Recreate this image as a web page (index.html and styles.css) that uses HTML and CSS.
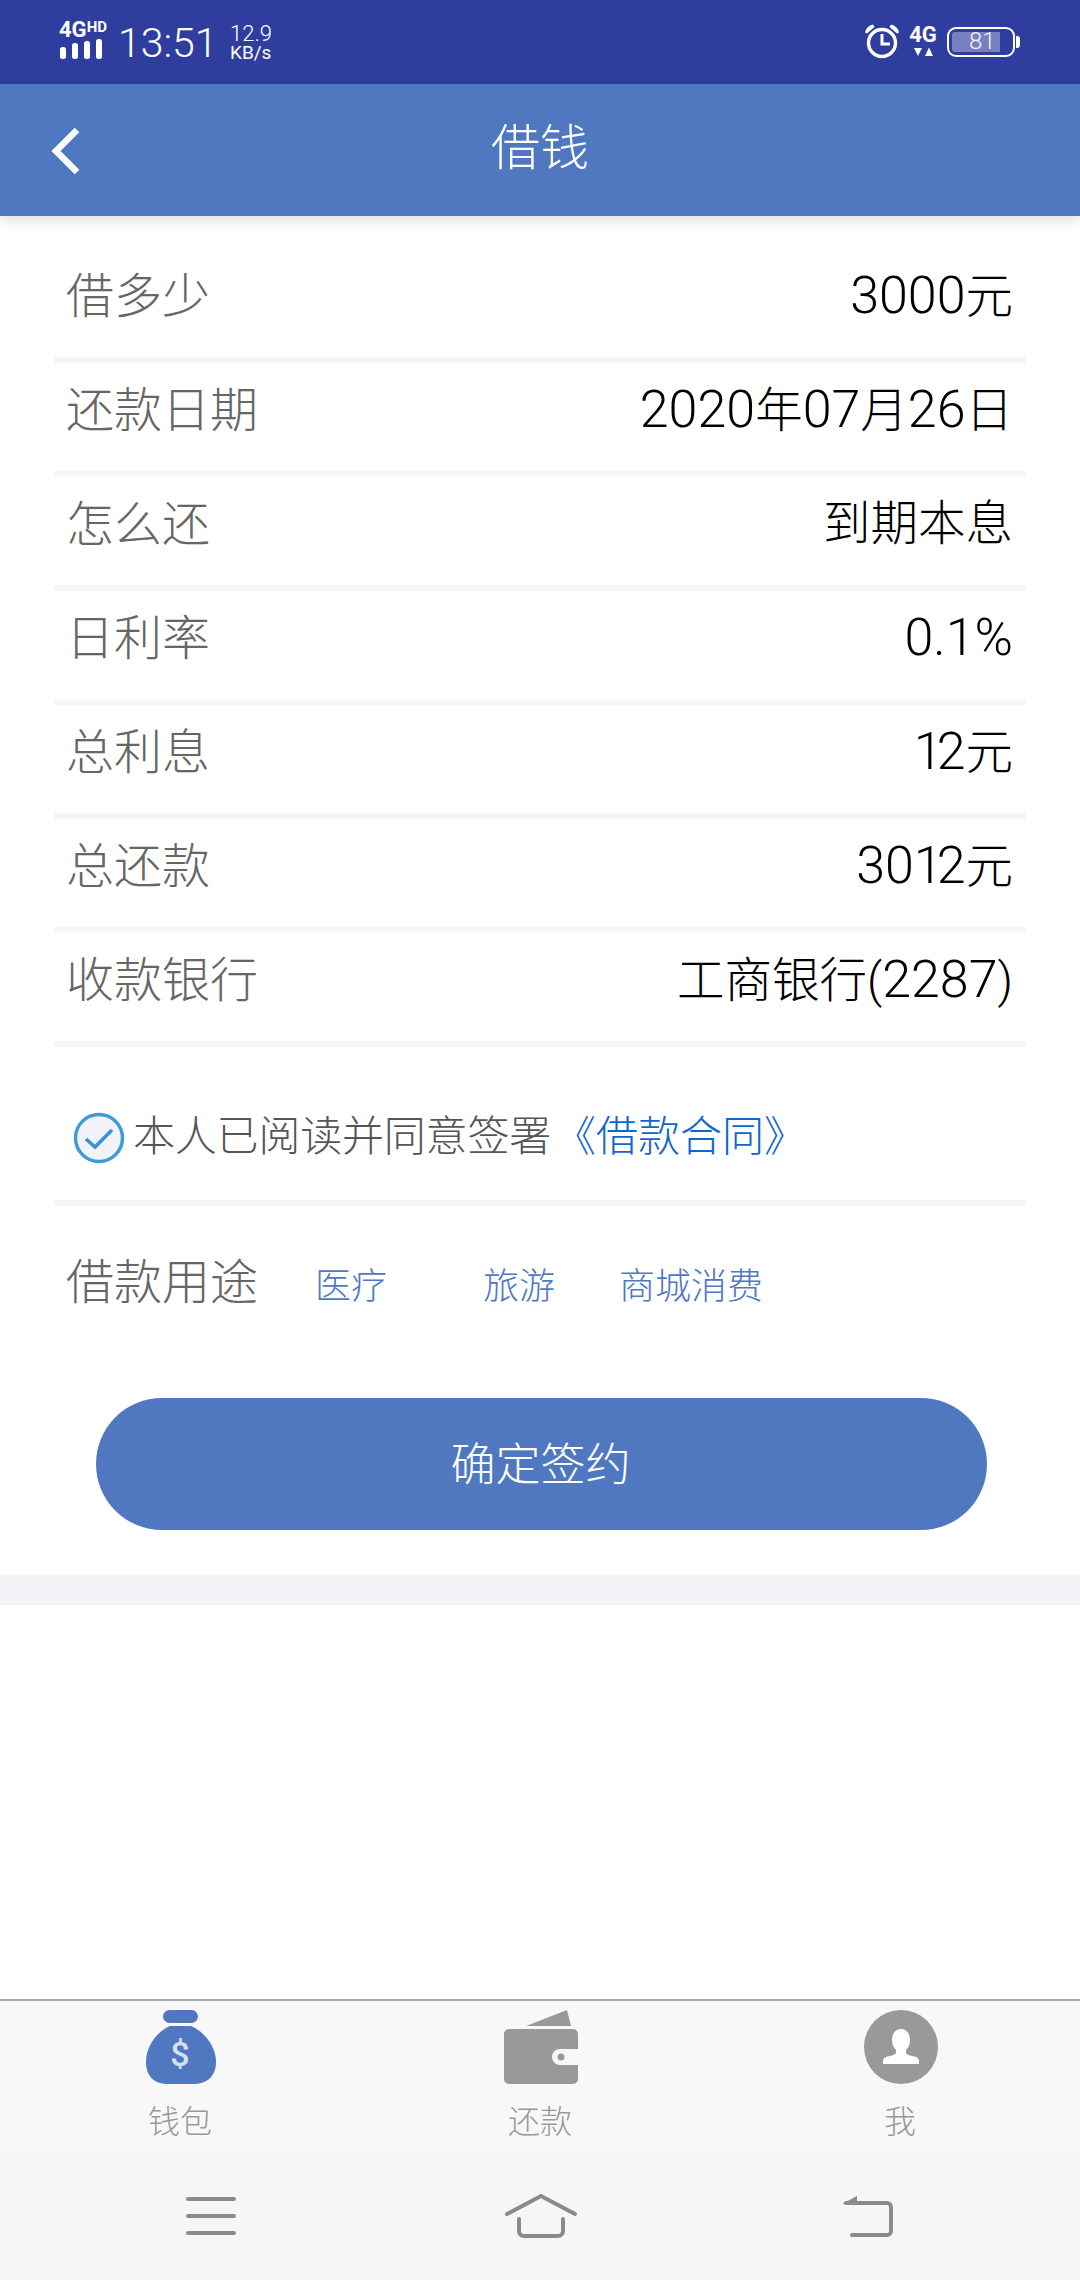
FILE: index.html
```html
<!DOCTYPE html>
<html lang="zh-CN">
<head>
    <meta charset="UTF-8">
    <meta name="viewport" content="width=device-width, initial-scale=1.0">
    <title>借钱</title>
    <link rel="stylesheet" href="styles.css">
</head>

<body>
    <div class="page">
        <!-- status bar -->
        <div class="status-bar">
            <div class="signal">
                <div class="signal-text">4G<span class="signal-hd">HD</span></div>
                <svg class="signal-bars" width="44" height="21" viewBox="0 0 44 21" fill="#fff">
                    <rect x="0" y="9" width="6" height="12" rx="2.5"/>
                    <rect x="12" y="5" width="6" height="16" rx="2.5"/>
                    <rect x="24" y="3" width="6" height="18" rx="2.5"/>
                    <rect x="36" y="1" width="6" height="20" rx="2.5"/>
                </svg>
            </div>
            <div class="clock">13:51</div>
            <div class="speed">
                <div class="speed-num">12.9</div>
                <div class="speed-unit">KB/s</div>
            </div>
            <div class="status-right">
                <svg class="alarm" width="36" height="36" viewBox="0 0 36 36" fill="none" stroke="#fff">
                    <circle cx="18" cy="20" r="13.5" stroke-width="3.4"/>
                    <path d="M18 11v10h8" stroke-width="3"/>
                    <path d="M1 9.500C2 5 5 2.500 9 1.500l1.500 2.500L3 10.500z" fill="#fff" stroke="none"/>
                    <path d="M35 9.500C34 5 31 2.500 27 1.500l-1.500 2.500L33 10.500z" fill="#fff" stroke="none"/>
                </svg>
                <div class="net">
                    <div class="net-text">4G</div>
                    <svg width="19" height="10" viewBox="0 0 19 10" fill="#fff">
                        <path d="M0 1h8l-4 8z"/>
                        <path d="M15 0.500l4 8.500h-8z"/>
                    </svg>
                </div>
                <div class="battery">
                    <div class="battery-body">
                        <div class="battery-fill"></div>
                        <span class="battery-num">81</span>
                    </div>
                    <div class="battery-nub"></div>
                </div>
            </div>
        </div>

        <!-- header -->
        <div class="header">
            <svg class="back" width="30" height="48" viewBox="0 0 30 48" fill="none" stroke="#fff" stroke-width="6.500">
                <path d="M26 3L5 24l21 21"/>
            </svg>
            <h1 class="title">借钱</h1>
        </div>

        <div class="main">
            <div class="rows">
                <div class="row"><span class="row-label">借多少</span><span class="row-value"><span class="num">3000</span>元</span></div>
                <div class="row"><span class="row-label">还款日期</span><span class="row-value"><span class="num">2020</span>年<span class="num">07</span>月<span class="num">26</span>日</span></div>
                <div class="row"><span class="row-label">怎么还</span><span class="row-value">到期本息</span></div>
                <div class="row"><span class="row-label">日利率</span><span class="row-value"><span class="num">0.1%</span></span></div>
                <div class="row"><span class="row-label">总利息</span><span class="row-value"><span class="num"><span class="one">1</span>2</span>元</span></div>
                <div class="row"><span class="row-label">总还款</span><span class="row-value"><span class="num">30<span class="one">1</span>2</span>元</span></div>
                <div class="row"><span class="row-label">收款银行</span><span class="row-value">工商银行(<span class="num">2287</span>)</span></div>
            </div>

            <div class="agree">
                <svg class="agree-check" width="52" height="52" viewBox="0 0 52 52">
                    <circle cx="26" cy="26" r="23.500" fill="#f2f3f8" stroke="#3f9bd8" stroke-width="3.500"/>
                    <path d="M13 27l9 8 17-17" fill="none" stroke="#3f8fd4" stroke-width="3.500"/>
                </svg>
                <span class="agree-text">本人已阅读并同意签署</span>
                <span class="agree-link">《借款合同》</span>
            </div>

            <div class="purpose">
                <span class="purpose-label">借款用途</span>
                <span class="purpose-opt first">医疗</span>
                <span class="purpose-opt">旅游</span>
                <span class="purpose-opt">商城消费</span>
            </div>

            <div class="btn-wrap">
                <button class="btn-sign">确定签约</button>
            </div>

            <div class="band"></div>
        </div>

        <!-- tabs -->
        <div class="tabbar">
            <div class="tab">
                <svg width="72" height="76" viewBox="0 0 72 76">
                    <rect x="18" y="1" width="35" height="13" rx="6.500" fill="#4f78c1"/>
                    <path d="M25 17h21C60 23 71 38 71 53c0 15-10 22-23 22H23C10 75 1 68 1 53 1 38 11 23 25 17z" fill="#4f78c1"/>
                    <text class="bag-sign" x="35" y="57" text-anchor="middle">$</text>
                </svg>
                <span class="tab-label">钱包</span>
            </div>
            <div class="tab">
                <svg width="76" height="76" viewBox="0 0 76 76" fill="#999">
                    <path d="M23 17L64 1l4 16z"/>
                    <path d="M6 20h64a5 5 0 0 1 5 5v15H57a8 8 0 0 0 0 16h18v14a5 5 0 0 1-5 5H6a5 5 0 0 1-5-5V25a5 5 0 0 1 5-5z"/>
                    <circle cx="58" cy="48" r="3.500"/>
                </svg>
                <span class="tab-label">还款</span>
            </div>
            <div class="tab">
                <svg width="76" height="76" viewBox="0 0 76 76">
                    <circle cx="38" cy="38" r="37" fill="#999"/>
                    <path d="M38 20c5 0 9 4 9 11 0 5-2 8-4 10v3c1 2 6 3 10 4 2 1 3 2 3 4v3H20v-3c0-2 1-3 3-4 4-1 9-2 10-4v-3c-2-2-4-5-4-10 0-7 4-11 9-11z" fill="#fff"/>
                </svg>
                <span class="tab-label">我</span>
            </div>
        </div>

        <!-- system nav -->
        <div class="navbar">
            <svg width="50" height="42" viewBox="0 0 50 42" fill="none" stroke="#8a8a8a" stroke-width="4" stroke-linecap="round">
                <path d="M2 4h46M2 21h46M2 38h46"/>
            </svg>
            <svg class="nav-home" width="72" height="44" viewBox="0 0 72 44" fill="none" stroke="#8a8a8a" stroke-width="4" stroke-linecap="round" stroke-linejoin="round">
                <path d="M2 20L36 2l34 18"/>
                <path d="M14 25v12a5 5 0 0 0 5 5h34a5 5 0 0 0 5-5V25"/>
            </svg>
            <svg width="52" height="42" viewBox="0 0 52 42" fill="none" stroke="#8a8a8a" stroke-width="4" stroke-linecap="round" stroke-linejoin="round">
                <path d="M4 8h41a4 4 0 0 1 4 4v24a4 4 0 0 1-4 4H10"/>
                <path d="M0 9L15 1v8z" fill="#8a8a8a" stroke="none"/>
            </svg>
        </div>
    </div>
</body>
</html>
```

FILE: styles.css
```css
* {
    box-sizing: border-box;
}
body {
    margin: 0;
    font-family: Roboto, "Noto Sans CJK SC", sans-serif;
    background: #fff;
}
.page {
    width: 1080px;
    height: 2280px;
    display: flex;
    flex-direction: column;
    overflow: hidden;
}

/* status bar */
.status-bar {
    height: 84px;
    background: #2f3e9e;
    color: #fff;
    display: flex;
    align-items: center;
    padding: 0 60px 0 60px;
}
.signal {
    width: 58px;
    display: flex;
    flex-direction: column;
    margin-top: -6px;
}
.signal-text {
    font-size: 22px;
    font-weight: 700;
    line-height: 17px;
    height: 19px;
    margin-left: -1px;
}
.signal-hd {
    font-size: 15px;
    vertical-align: 5px;
}
.clock {
    font-size: 41px;
    font-weight: 300;
    width: 112px;
    line-height: 48px;
    padding-top: 2px;
}
.speed {
    line-height: 19px;
    margin-top: 1px;
}
.speed-num {
    font-size: 22px;
    font-weight: 300;
}
.speed-unit {
    font-size: 19px;
}
.status-right {
    margin-left: auto;
    display: flex;
    align-items: center;
    margin-right: 0;
}
.alarm {
    margin-right: 9px;
    margin-top: -2px;
}
.net {
    width: 28px;
    margin-right: 10px;
    display: flex;
    flex-direction: column;
    align-items: center;
    margin-top: -2px;
}
.net-text {
    font-size: 22px;
    font-weight: 700;
    line-height: 20px;
    margin-bottom: 2px;
}
.battery {
    display: flex;
    align-items: center;
    margin-top: -1px;
}
.battery-body {
    width: 68px;
    height: 30px;
    border: 2.500px solid #fff;
    border-radius: 9px;
    padding: 3px;
    display: flex;
    position: relative;
}
.battery-fill {
    width: 48px;
    background: rgba(255, 255, 255, .35);
    border-radius: 3px 0 0 3px;
}
.battery-num {
    position: absolute;
    top: 0;
    left: 20px;
    font-size: 24px;
    line-height: 25px;
    color: #f0f1f8;
    font-weight: 300;
}
.battery-nub {
    width: 4px;
    height: 12px;
    background: #fff;
    border-radius: 0 3px 3px 0;
    margin-left: 1px;
}

/* header */
.header {
    height: 132px;
    background: #4f78c1;
    display: flex;
    align-items: center;
    justify-content: center;
    position: relative;
    box-shadow: 0 4px 14px rgba(0, 0, 0, .14);
    z-index: 1;
}
.back {
    position: absolute;
    left: 51px;
    top: 43px;
}
.title {
    margin: 0;
    color: #fff;
    font-size: 49px;
    font-weight: 300;
    line-height: 132px;
    margin-top: -2px;
}

.main {
    flex: 1;
    padding-top: 33px;
}

/* rows */
.rows {
    margin: 0 54px;
}
.row {
    height: 114px;
    border-bottom: 6px solid #f6f6f6;
    padding: 0 13px 0 12px;
    display: flex;
    justify-content: space-between;
    line-height: 94px;
}
.row-label {
    font-size: 48px;
    color: #666;
    font-weight: 300;
    margin-top: 1px;
}
.row-value {
    font-size: 47.500px;
    color: #000;
    font-weight: 300;
}
.num {
    font-size: 52px;
}
.one {
    letter-spacing: -6px;
}

/* agreement */
.agree {
    margin: 0 54px;
    height: 159px;
    border-bottom: 6px solid #f6f6f6;
    display: flex;
    align-items: center;
    padding: 18px 0 0 19px;
}
.agree-check {
    margin-top: 10px;
    margin-right: 8px;
}
.agree-text {
    font-size: 42px;
    color: #555;
    font-weight: 300;
    letter-spacing: -.2px;
}
.agree-link {
    font-size: 42px;
    color: #0f66cc;
    font-weight: 300;
    margin-left: 3px;
}

/* purpose */
.purpose {
    margin: 0 54px;
    padding-left: 12px;
    height: 134px;
    display: flex;
    align-items: center;
    padding-top: 10px;
}
.purpose-label {
    font-size: 48px;
    color: #666;
    font-weight: 300;
    margin-right: 57px;
}
.purpose-opt {
    font-size: 36px;
    color: #4f78c1;
    font-weight: 300;
    margin-right: 64px;
    margin-top: 10px;
}
.purpose-opt.first {
    margin-right: 96px;
}

/* button */
.btn-wrap {
    padding: 58px 93px 0 96px;
}
.btn-sign {
    display: block;
    width: 100%;
    height: 132px;
    border: 0;
    padding: 0 2px 6px 0;
    border-radius: 66px;
    background: #4f78c1;
    color: #fff;
    font-family: inherit;
    font-size: 45px;
    font-weight: 300;
}
.band {
    height: 30px;
    margin-top: 45px;
    background: #f3f4f8;
}

/* tabs */
.tabbar {
    height: 154px;
    background: #f8f8f8;
    border-top: 2px solid #aaa;
    display: grid;
    grid-template-columns: repeat(3, 1fr);
}
.tab {
    display: flex;
    flex-direction: column;
    align-items: center;
    padding-top: 8px;
}
.tab svg {
    display: block;
    margin-left: 2px;
}
.tab-label {
    font-size: 32px;
    line-height: 46px;
    color: #999;
    font-weight: 300;
    margin-top: 14px;
}
.bag-sign {
    font-size: 34px;
    font-weight: 500;
    fill: #d5e0f3;
}

/* system nav */
.navbar {
    height: 127px;
    background: #f6f6f6;
    display: flex;
    align-items: center;
    justify-content: space-between;
    padding: 0 186px 2px 186px;
}
.nav-home {
    margin-left: 4px;
}
```
